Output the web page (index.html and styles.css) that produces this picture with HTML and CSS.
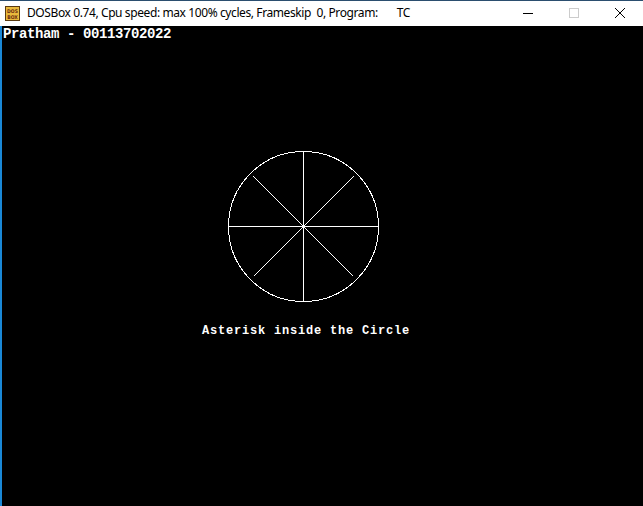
FILE: index.html
```html
<!DOCTYPE html>
<html>
<head>
<meta charset="utf-8">
<link rel="stylesheet" href="styles.css">
</head>
<body>
<div class="window">
  <div class="titlebar">
    <svg class="app-icon" width="15" height="15" viewBox="0 0 15 15">
      <rect x="0.5" y="0.5" width="14" height="14" fill="#e9b93c" stroke="#5a3a10"/>
      <text x="7.5" y="6.6" text-anchor="middle" class="icon-text">DOS</text>
      <text x="7.5" y="12.8" text-anchor="middle" class="icon-text">BOX</text>
    </svg>
    <div class="title">DOSBox 0.74, Cpu speed: max 100% cycles, Frameskip  0, Program:       TC</div>
    <div class="controls">
      <div class="ctl">
        <svg width="10" height="10" viewBox="0 0 10 10"><path d="M0 5.5H10" stroke="#000" stroke-width="1" shape-rendering="crispEdges"/></svg>
      </div>
      <div class="ctl">
        <svg width="10" height="10" viewBox="0 0 10 10"><rect x="0.5" y="0.5" width="9" height="9" fill="none" stroke="#cccccc" shape-rendering="crispEdges"/></svg>
      </div>
      <div class="ctl">
        <svg width="10" height="10" viewBox="0 0 10 10"><path d="M0 0L10 10M10 0L0 10" stroke="#000" stroke-width="1"/></svg>
      </div>
    </div>
  </div>
  <div class="screen">
    <div class="dos-line">Pratham - 00113702022</div>
    <svg class="canvas" width="641" height="480" viewBox="0 0 641 480" shape-rendering="crispEdges">
      <g stroke="#ffffff" stroke-width="1" fill="none">
        <circle cx="301.5" cy="200.5" r="75"/>
        <line x1="301.5" y1="125.5" x2="301.5" y2="275.5"/>
        <line x1="226.5" y1="200.5" x2="376.5" y2="200.5"/>
        <line x1="251.5" y1="150.5" x2="351.5" y2="250.5"/>
        <line x1="351.5" y1="150.5" x2="251.5" y2="250.5"/>
      </g>
    </svg>
    <div class="caption">Asterisk inside the Circle</div>
  </div>
</div>
</body>
</html>
```
FILE: styles.css
```css
html, body {
  margin: 0;
  padding: 0;
  background: #000;
}
body {
  width: 643px;
  height: 506px;
  overflow: hidden;
}
.window {
  width: 643px;
  height: 506px;
  box-sizing: border-box;
  border-top: 1px solid #2b4e6f;
  display: flex;
  flex-direction: column;
}
.titlebar {
  height: 25px;
  flex: none;
  background: #ffffff;
  display: flex;
  align-items: center;
}
.app-icon {
  margin-left: 5px;
  flex: none;
  margin-top: -1px;
}
.icon-text {
  font-family: "DejaVu Sans Condensed", "DejaVu Sans", sans-serif;
  font-size: 5px;
  font-weight: bold;
  fill: #6a2a10;
}
.title {
  margin-left: 7px;
  font-family: "Noto Sans", sans-serif;
  font-size: 12px;
  letter-spacing: -0.4px;
  color: #000;
  white-space: pre;
  flex: 1;
  margin-top: -2px;
}
.controls {
  display: flex;
  height: 100%;
}
.ctl {
  width: 46px;
  height: 100%;
  display: flex;
  align-items: center;
  justify-content: center;
}
.ctl svg {
  margin-top: -2px;
}
.screen {
  flex: 1;
  background: #000;
  border-left: 2px solid #1a88d6;
  position: relative;
}
.dos-line {
  font-family: "Liberation Mono", monospace;
  font-weight: bold;
  font-size: 14px;
  letter-spacing: -0.4px;
  line-height: 15px;
  color: #fff;
  padding-left: 1px;
  padding-top: 1px;
  white-space: pre;
}
.canvas {
  position: absolute;
  left: 0;
  top: 0;
}
.caption {
  position: absolute;
  left: 200px;
  top: 299px;
  font-family: "Liberation Mono", monospace;
  font-weight: bold;
  font-size: 12px;
  line-height: 12px;
  letter-spacing: 0.8px;
  color: #fff;
  white-space: pre;
}
```
